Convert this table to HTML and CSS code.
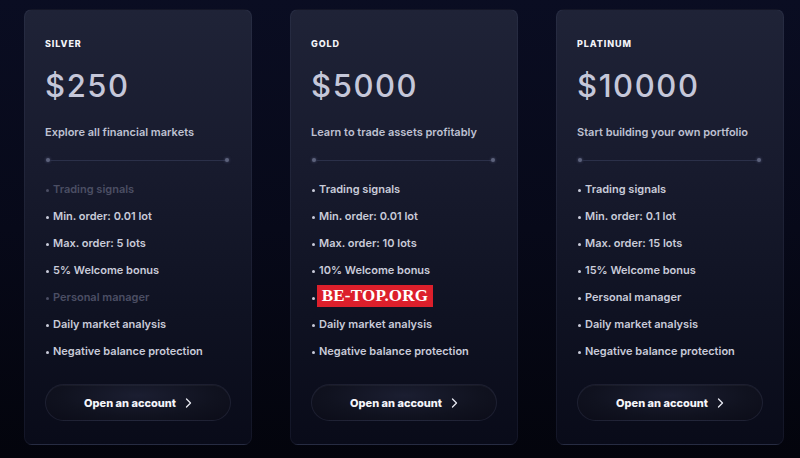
FILE: index.html
```html
<!DOCTYPE html>
<html>
<head>
<meta charset="utf-8">
<link rel="stylesheet" href="styles.css">
</head>
<body>
<div class="plans">
  <div class="card">
    <div class="label">SILVER</div>
    <div class="price">$250</div>
    <div class="desc">Explore all financial markets</div>
    <div class="divider"><span class="dot"></span><span class="line"></span><span class="dot"></span></div>
    <ul class="features">
      <li class="off">Trading signals</li>
      <li>Min. order: 0.01 lot</li>
      <li>Max. order: 5 lots</li>
      <li>5% Welcome bonus</li>
      <li class="off">Personal manager</li>
      <li>Daily market analysis</li>
      <li>Negative balance protection</li>
    </ul>
    <button class="btn">Open an account <svg class="chev" width="7" height="10" viewBox="0 0 7 10"><path d="M1.5 1 L5.5 5 L1.5 9" fill="none" stroke="#e8e9f2" stroke-width="1.3" stroke-linecap="round" stroke-linejoin="round"/></svg></button>
  </div>
  <div class="card">
    <div class="label">GOLD</div>
    <div class="price">$5000</div>
    <div class="desc">Learn to trade assets profitably</div>
    <div class="divider"><span class="dot"></span><span class="line"></span><span class="dot"></span></div>
    <ul class="features">
      <li>Trading signals</li>
      <li>Min. order: 0.01 lot</li>
      <li>Max. order: 10 lots</li>
      <li>10% Welcome bonus</li>
      <li>Personal manager</li>
      <li>Daily market analysis</li>
      <li>Negative balance protection</li>
    </ul>
    <button class="btn">Open an account <svg class="chev" width="7" height="10" viewBox="0 0 7 10"><path d="M1.5 1 L5.5 5 L1.5 9" fill="none" stroke="#e8e9f2" stroke-width="1.3" stroke-linecap="round" stroke-linejoin="round"/></svg></button>
  </div>
  <div class="card">
    <div class="label">PLATINUM</div>
    <div class="price">$10000</div>
    <div class="desc">Start building your own portfolio</div>
    <div class="divider"><span class="dot"></span><span class="line"></span><span class="dot"></span></div>
    <ul class="features">
      <li>Trading signals</li>
      <li>Min. order: 0.1 lot</li>
      <li>Max. order: 15 lots</li>
      <li>15% Welcome bonus</li>
      <li>Personal manager</li>
      <li>Daily market analysis</li>
      <li>Negative balance protection</li>
    </ul>
    <button class="btn">Open an account <svg class="chev" width="7" height="10" viewBox="0 0 7 10"><path d="M1.5 1 L5.5 5 L1.5 9" fill="none" stroke="#e8e9f2" stroke-width="1.3" stroke-linecap="round" stroke-linejoin="round"/></svg></button>
  </div>
</div>
<div class="watermark">BE-TOP.ORG</div>
</body>
</html>
```
FILE: styles.css
```css
html, body {
  margin: 0;
  padding: 0;
}
body {
  width: 800px;
  height: 458px;
  overflow: hidden;
  position: relative;
  background: linear-gradient(180deg, #0a0d22 0%, #070919 50%, #03040c 100%);
  font-family: "Inter", "Liberation Sans", sans-serif;
}
.plans {
  display: flex;
  gap: 38px;
  padding: 9px 0 0 24px;
}
.card {
  width: 228px;
  box-sizing: border-box;
  padding: 28px 20px 23px 20px;
  border-radius: 8px;
  border: 1px solid rgba(120, 130, 170, 0.10);
  background: linear-gradient(180deg, #1f2337 0%, #181b2e 35%, #0f1222 70%, #090b19 100%);
  display: flex;
  flex-direction: column;
}
.label {
  font-size: 9px;
  line-height: 12px;
  font-weight: 800;
  letter-spacing: 0.9px;
  color: #f2f3f8;
}
.price {
  margin-top: 16px;
  font-size: 31px;
  line-height: 40px;
  font-weight: 500;
  color: #c5c7d9;
  letter-spacing: 1.6px;
}
.desc {
  margin-top: 18px;
  font-size: 11px;
  line-height: 16px;
  font-weight: 600;
  color: #bfc1d2;
}
.divider {
  margin-top: 17px;
  height: 6px;
  display: flex;
  align-items: center;
  padding: 0 2px 0 1px;
}
.dot {
  width: 4px;
  height: 4px;
  border-radius: 50%;
  background: #5d627c;
  box-shadow: 0 0 3px rgba(140, 150, 190, 0.5);
}
.line {
  flex: 1;
  height: 1px;
  background: #2b3049;
}
.features {
  list-style: none;
  margin: 13px 0 0 0;
  padding: 0;
}
.features li {
  font-size: 11px;
  line-height: 27px;
  font-weight: 600;
  color: #c9cbd9;
  display: flex;
  align-items: center;
}
.features li::before {
  content: "";
  width: 3px;
  height: 3px;
  border-radius: 50%;
  background: currentColor;
  margin: 1px 4px 0 1px;
  flex: none;
}
.features li.off {
  color: #4b4e63;
}
.btn {
  margin-top: 19px;
  height: 37px;
  width: 100%;
  border-radius: 19px;
  border: 1px solid rgba(110, 118, 160, 0.16);
  background: radial-gradient(ellipse at 50% 30%, #1b1e31 0%, #10121f 60%, #0b0c18 100%);
  color: #f4f5fa;
  font-family: "Inter", "Liberation Sans", sans-serif;
  font-size: 11px;
  font-weight: 800;
  display: flex;
  align-items: center;
  justify-content: center;
  gap: 9px;
  padding: 0;
  box-shadow: inset 0 1px 0 rgba(255, 255, 255, 0.04);
}
.chev {
  display: block;
}
.watermark {
  position: absolute;
  left: 317px;
  top: 285px;
  width: 116px;
  height: 22px;
  background: #dc1f2b;
  color: #ffffff;
  font-family: "Liberation Serif", serif;
  font-weight: 700;
  font-size: 17px;
  line-height: 22px;
  text-align: center;
  letter-spacing: 0.2px;
}
```
